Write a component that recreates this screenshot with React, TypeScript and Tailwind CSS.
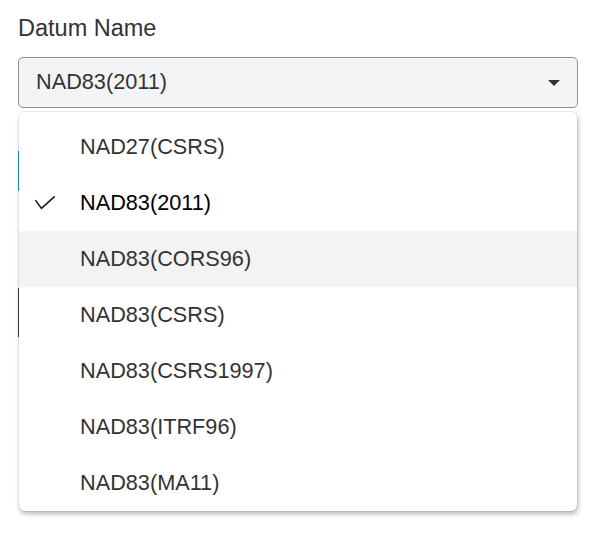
const options = [
  "NAD27(CSRS)",
  "NAD83(2011)",
  "NAD83(CORS96)",
  "NAD83(CSRS)",
  "NAD83(CSRS1997)",
  "NAD83(ITRF96)",
  "NAD83(MA11)",
];

const selected = "NAD83(2011)";
const hovered = "NAD83(CORS96)";

const CheckMark = () => (
  <svg width="20" height="14" viewBox="0 0 20 14" fill="none">
    <path d="M0.8 4.6 L6.4 12.4 L19.2 0.8" stroke="#1a1a1a" strokeWidth="1.6" strokeLinecap="round" strokeLinejoin="round" />
  </svg>
);

const App = () => {
  return (
    <div
      className="relative w-[606px] h-[548px] bg-white pl-[18px] pt-[14px]"
      style={{ fontFamily: '"Liberation Sans", Arial, sans-serif' }}
    >
      <label className="block text-[23.5px] leading-[28px] text-[#333]">Datum Name</label>

      <button className="mt-[15px] flex items-center justify-between w-[560px] h-[51px] rounded-[5px] border border-[#8f8f8f] bg-[#f3f4f6] pl-[17px] pr-[17px] text-[21.7px] text-[#333]">
        <span>{selected}</span>
        <span className="w-0 h-0 border-l-[6px] border-r-[6px] border-t-[6px] border-l-transparent border-r-transparent border-t-[#333]" />
      </button>

      {/* form controls sitting behind the open menu */}
      <div className="mt-[43px] w-[320px] h-[40px] bg-[#1fa2c2]" />
      <div className="mt-[97px] w-[320px] h-[49px] border border-[#333] bg-white" />

      <ul className="absolute left-[19px] top-[112px] w-[558px] h-[399px] overflow-hidden rounded-[6px] bg-white pt-[7px] shadow-[0_0_0_1px_rgba(0,0,0,0.06),1px_3px_5px_rgba(0,0,0,0.28)]">
        {options.map((o) => (
          <li
            key={o}
            className={
              "flex items-center h-[56px] pl-[16px] text-[21.7px] " +
              (o === hovered ? "bg-[#f3f3f3] " : "") +
              (o === selected ? "text-black" : "text-[#333]")
            }
          >
            <span className="w-[45px] flex items-center">{o === selected && <CheckMark />}</span>
            <span>{o}</span>
          </li>
        ))}
      </ul>
    </div>
  );
};

export default App;
